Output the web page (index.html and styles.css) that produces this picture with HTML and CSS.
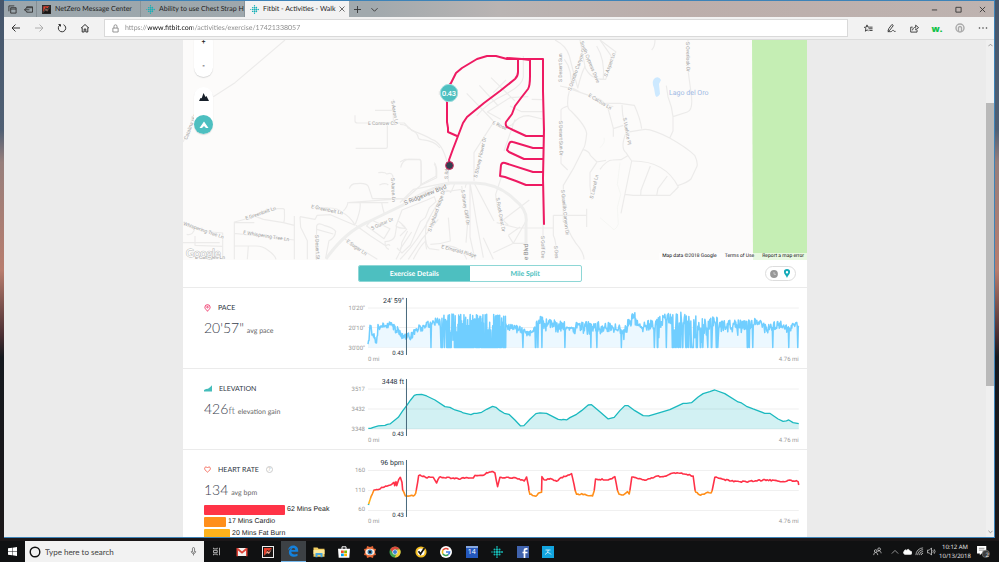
FILE: index.html
```html
<!DOCTYPE html>
<html lang="en">
<head>
<meta charset="utf-8">
<title>Fitbit - Activities - Walk</title>
<link rel="stylesheet" href="styles.css">
</head>
<body>
<svg class="defs" aria-hidden="true">
  <symbol id="fitbit" viewBox="0 0 11 11">
    <g fill="currentColor"><circle cx="5.500" cy=".9" r=".8"/><circle cx="5.500" cy="3.200" r="1.100"/><circle cx="5.500" cy="5.500" r="1.200"/><circle cx="5.500" cy="7.800" r="1.100"/><circle cx="5.500" cy="10.100" r=".8"/><circle cx="3.200" cy="3.200" r=".9"/><circle cx="3.200" cy="5.500" r="1"/><circle cx="3.200" cy="7.800" r=".9"/><circle cx="7.800" cy="3.200" r="1"/><circle cx="7.800" cy="5.500" r="1.100"/><circle cx="7.800" cy="7.800" r="1"/><circle cx="10.100" cy="5.500" r=".9"/><circle cx=".9" cy="5.500" r=".7"/></g>
  </symbol>
  <symbol id="netzero" viewBox="0 0 10 10">
    <path fill="#191514" d="M0 0h10v10H0z"/><path fill="#e8402c" d="M1 1h8L6 4 4 3 3 6 1 9z"/><path fill="#f6a58c" d="M2 8l2-4 2 1 3-3-3 5-2-1z"/>
  </symbol>
</svg>

<main class="desktop">
  <div class="window">
    <header class="titlebar">
      <div class="tab-tools">
        <button aria-label="Tabs you've set aside"><svg viewBox="0 0 10 10" width="9" height="9"><path d="M3 3h6v6H3zM3 4.500h6M1 7V1h6"/></svg></button>
        <button aria-label="Set these tabs aside"><svg viewBox="0 0 10 10" width="9" height="9"><path d="M3 4V2h6.500v6H3V6.500M3 3h6.500M.5 5.300H6M2.500 3.500.5 5.300l2 1.700"/></svg></button>
      </div>
      <nav class="tabs">
        <a class="tab" href="#"><svg width="9" height="9"><use href="#netzero"/></svg><span>NetZero Message Center</span></a>
        <a class="tab" href="#"><svg class="fit-ico" width="9" height="9"><use href="#fitbit"/></svg><span>Ability to use Chest Strap H</span></a>
        <a class="tab active" href="#"><svg class="fit-ico" width="9" height="9"><use href="#fitbit"/></svg><span>Fitbit - Activities - Walk</span><svg class="close" width="6" height="6" viewBox="0 0 6 6"><path d="M.5.5l5 5M5.500.5l-5 5"/></svg></a>
      </nav>
      <button class="new-tab" aria-label="New tab"><svg viewBox="0 0 8 8" width="7" height="7"><path d="M4 0v8M0 4h8"/></svg></button>
      <button class="new-tab" aria-label="Tab previews"><svg viewBox="0 0 8 8" width="7" height="7"><path d="M.5 2.500 4 6l3.500-3.500"/></svg></button>
      <div class="window-controls">
        <button aria-label="Minimize"><svg viewBox="0 0 8 8" width="7" height="7"><path d="M1 4.500h6"/></svg></button>
        <button aria-label="Maximize"><svg viewBox="0 0 8 8" width="7" height="7"><path d="M1 1.500h6v5.500H1z"/></svg></button>
        <button aria-label="Close"><svg viewBox="0 0 8 8" width="7" height="7"><path d="M1 1l6 6M7 1 1 7"/></svg></button>
      </div>
    </header>

    <div class="toolbar">
      <div class="nav-buttons">
        <button aria-label="Back"><svg viewBox="0 0 10 10" width="10" height="10"><path d="M9 5H1M4.500 1.500 1 5l3.500 3.500"/></svg></button>
        <button class="dim" aria-label="Forward"><svg viewBox="0 0 10 10" width="10" height="10"><path d="M1 5h8M5.500 1.500 9 5 5.500 8.500"/></svg></button>
        <button aria-label="Refresh"><svg viewBox="0 0 10 10" width="10" height="10"><path d="M6.500 1.700A3.700 3.700 0 1 1 3 2M1.500 1.500H3.500V3.500"/></svg></button>
        <button aria-label="Home"><svg viewBox="0 0 10 10" width="10" height="10"><path d="M1 5.200 5 1.500l4 3.700M2.200 4.500V9h2V6h1.600v3h2V4.500"/></svg></button>
      </div>
      <div class="address">
        <svg viewBox="0 0 8 10" width="7" height="9"><path d="M1 4.500h6V9H1zM2.300 4.500V2.500a1.700 1.700 0 0 1 3.400 0v2"/></svg>
        <input type="text" aria-label="Address" value="https://www.fitbit.com/activities/exercise/17421338057">
      </div>
      <div class="actions">
        <button aria-label="Favorites"><svg viewBox="0 0 10 10" width="9" height="9"><path d="M6 3.500 4.300 3.400 3.300 1 2.500 3.500.4 3.600l1.700 1.700L1.500 8l2-1.400 1.500.9M6 3.500h3.500M5 5.300h4.500M6 7.200h3.500"/></svg></button>
        <button aria-label="Add notes"><svg viewBox="0 0 10 10" width="9" height="9"><path d="M1 8 2 5l3.500-4.500L7 1.700 3.500 6.500 1 8.500h3c2 0 2-2 3-1.500s0 1.500 2.500 1.200"/></svg></button>
        <button aria-label="Share"><svg viewBox="0 0 10 10" width="9" height="9"><path d="M3 3.500H.8V9h7V6.500M2.800 7c.4-2.500 1.700-3.300 3.500-3.300V1.300L9.500 4 6.300 6.500V5"/></svg></button>
        <button class="webroot" aria-label="Extension">w.</button>
        <button aria-label="Profile"><svg class="gray" viewBox="0 0 10 10" width="10" height="10"><circle cx="5" cy="5" r="4"/><path d="M3.500 8V4.500a1.600 1.600 0 0 1 3 0V8"/></svg></button>
        <button aria-label="More"><svg class="solid" viewBox="0 0 10 10" width="10" height="10"><circle cx="1.500" cy="5" r=".8"/><circle cx="5" cy="5" r=".8"/><circle cx="8.500" cy="5" r=".8"/></svg></button>
      </div>
    </div>

    <div class="viewport">
      <div class="page">
        <section class="map" aria-label="Route map">
          <svg class="map-art" viewBox="183 40 624 220">
            <path fill="#c5eeb4" d="M752 40h55v220H753z"/>
            <!-- western streets -->
            <g class="roads" transform="translate(180 36) scale(.33333)">
              <path d="M315 12 165 140 100 182M36 240Q34 270 9 318"/>
              <path d="M525 238v17q0 6 8 6h140q12 12 10 14 30 13 32 30 0 4 10 6 40 4 55 25M585 223h55v38M622 263v70q0 4-5 4h-90M640 190v40M778 165v12"/>
              <path d="M508 458q5-16 22-15 28-3 35 8 10 30 12 37h105M595 410q20-3 25 4 20-8 19 15v58M662 395q5-25 25-25l30 1q7 0 6 8v68l-50 45M763 380q9 8 7 45l-50 24M505 500l160-12 10 12M598 447q20-8 27 0M605 500q3 18 8 33M505 500h120"/>
              <path d="M490 525q13-13 14-27M540 500q4 18-14 65M395 515q80-3 88 12 28 14 42 40M163 670V558q45-10 62-20 30-18 55-20h28q7 0 5 8 2 30-3 34l-60-10-33-12-10 12M163 592l180 20M163 630h65q20 0 35 12 22 15 25 28M205 630l-3 40M343 540v130M343 568l-33-8M163 560h60M360 542l45 8q5-8 6-12l40-2 42 18 32 14M360 542l2 32 20 40v56M408 670l2-100q3-12 22-2 28 7 35 18-2 20-20 28l-10 52M410 580l50 14M490 606 592 670M527 568l45 32 45 29q10-6 13 0"/>
              <path d="M9 558q50 20 60 28l60 5M128 590v80M45 600v28l83 3M20 595q20 5 26-22M9 620h110M560 570 612 608 630 578 575 552zM655 555q25 20 20 22-20 0-27-7l18-48 75-30 22-10 5 15-20 18-12 30-15 12-30 70-25 24-15-15M650 570l-5 30q-5 15-30 17 0 20 12 23M700 670q20-40 36-54M736 596q0 32 12 42l30 4M648 670q18-30 17-50l18-35"/>
            </g>
            <!-- central streets -->
            <g class="roads" transform="translate(400 36) scale(.33333)">
              <path d="M0 265q22 0 35 18 48 18 62 28 30 10 45 70M0 378l15-8h45q5 0 4 75M102 385q8 4 6 36L60 447M145 400v40M200 172 280 255M238 148 295 210M273 125 345 195M230 240q30-40 90-67 48-26 50-50V60M280 260 222 350v85M302 250 262 228 330 185 385 182M395 190l32 1M330 210l35 17h65M315 275l20-8q20-28 50-28l42 10M280 170l38-38M345 250 312 345M305 420l-18 55q5 70 38 92M305 555 388 492M290 560 352 576h107M340 622l40-70M280 650l60-28h40M325 598l15 24M325 598 360 573"/>
              <path d="M142 440 40 460 0 500M165 440q-15 40-15 25l-20-5M185 450l18 110-5 60M210 443v160l15 67M196 455q0-15 14-15l20 120 20 105M222 440l60 115M130 468l55-8M132 468 80 560q-8 50 0 80M0 670q50-50 90-125M25 670l40-60 50-60M145 545l6 70q-30 10-60 10M0 600l20-20-15-14M0 640l35-52M250 605l30 65M125 628q60 0 75 42"/>
              <path d="M465 12Q500 30 508 60q10 40 25 95M540 12l15 80q-10 16-22 65M600 12l35 50M480 150l22 5q20 0 40 15M515 160l85 30q18 20 40 22M508 165q-6 20-5 40 0 15 10 20 45 45 47 68-4 40-10 45l-30 60-30 50v110M503 210q-20 8-20 12v160q10 10 20 20M548 340q20 5 23 18l20 20M590 380l-20 30v40l5 40M590 378l28-5M460 538h100M460 538v60q10 20 10 72M500 570q15 38 38 65 14 20 14 35M560 518v55M429 100v570"/>
              <path d="M513 160q5-60-20-90M553 90q18 42 60 40M590 30q25 40 20 100"/>
            </g>
            <path class="boulevard" d="M326 259 Q345 232 368 222 L403 205 Q425 190 450 183 H475 Q500 184 515 200 Q528 210 526 223 V260"/>
            <!-- eastern streets -->
            <g class="roads" transform="translate(600 36) scale(.33333)">
              <path d="M0 12 48 48 30 72M42 60 17 130H0M165 12q0 20-10 30M264 12v90l8 60q10 60-10 66l-43 14q-3-30-15-60l-5-33M219 240v45l-10 22M0 190q25 20 20 12h40l43 6q18 40 22 70M20 202l20 75v25M40 278l30-10M66 207q0 30 8 55l5 27 50-8q20-6 80 25 50 28 75 52 10 20 7 33l-18 38q-10 10-40 20M78 290q-18 45 0 60l17 25M0 400q20-28 38-28l25-1 20-12M95 375l-32 157M95 375q100-2 140 78l-25 25H100l-26-3M151 390l-28 73-1 15M202 420l-28 38-4 20"/>
              <path class="trail" d="M12 305q5 15-12 30M60 380l-8 65 10 30-10 40 3 50q-12 25-20 10L0 545"/>
            </g>
            <path fill="#cde9ff" d="M655 78q4-2 6 2l-2 4 1 10q-4 6-5 0l-1-6q-3-7 1-10z"/>
            <g class="streets">
              <text x="368" y="125">E Conrow Ct</text><text transform="translate(391 101) rotate(80)">S Aaron Ln</text><text transform="translate(391 178) rotate(87)">S Aaron Ln</text>
              <text transform="translate(246 220) rotate(-19)">E Greenbelt Ln</text><text transform="translate(311 208) rotate(12)">E Greenbelt Ln</text><text transform="translate(243 234) rotate(9)">E Whispering Tree Ln</text><text transform="translate(183 225) rotate(19)">Whispering Tree Ln</text>
              <text transform="translate(187 140) rotate(-69)">Catalina Hls</text><text transform="translate(372 230) rotate(-24)">S Guitar Dr</text><text transform="translate(346 242) rotate(35)">E Sugar Ln</text><text transform="translate(315 235) rotate(87)">S Desert St</text><text x="195" y="259">E Cat Eyes Ln</text>
              <text transform="translate(431 232) rotate(-71)">S Highland Ridge Dr</text><text transform="translate(461 190) rotate(81)">S Shiney Cliff Dr</text><text transform="translate(477 178) rotate(-77)">S Stoney Flower Dr</text><text transform="translate(496 198) rotate(80)">S Rock Crest Dr</text><text x="492" y="124" transform="rotate(23 492 124)">E Rose</text><text transform="translate(448 179) rotate(-86)">S Rd</text><text transform="translate(441 248) rotate(15)">E Emerald Ridge</text>
              <text transform="translate(559 121) rotate(89)">S Desert Sun Dr</text><text transform="translate(561 190) rotate(84)">S Granillo Canyon Dr</text><text transform="translate(541 236) rotate(89)">S Golf Cre</text><text transform="translate(554 246) rotate(84)">S Des</text><text transform="translate(562 82) rotate(-90)">S Desert Sun</text><text transform="translate(571 91) rotate(-71)">S Ocotillo Canyon Dr</text><text transform="translate(580 42) rotate(68)">South Cypress Drive</text><text transform="translate(588 96) rotate(32)">E Cactus Ln</text><text transform="translate(607 77) rotate(-70)">S Aspen Ln</text><text transform="translate(593 199) rotate(-77)">S Laurel Ln</text><text transform="translate(623 118) rotate(80)">S Vuelvite Pl</text><text transform="translate(686 42) rotate(89)">S Overlook Dr</text>
            </g>
            <text class="blvd-name" transform="translate(405 205) rotate(-22)">S Ridgeview Blvd</text><text class="blvd-name" transform="translate(528 260) rotate(-90)">e Blvd</text>
            <text class="lake" x="669" y="95">Lago del Oro</text>
            <path class="route" d="M450 165 449 160 453 149 458 136 463 123 467 117 484 103 500 91 515 79Q518 76 518 72V60M457 136 448 132V128L447 122V93Q448 86 451 83L456 73 462 68 477 59 487 56H496L507 59 543 59V91L544 130 543 178 544 224M507 58 522 59 530 60V76Q530 86 528 89L521 98 515 106 512 114 506 122Q505 125 507 127L513 130 526 136H544M543 148H533L513 142Q510 141 509 144L507 150 509 152 524 159H543M543 172H533L505 163Q502 162 501 165L500 176 505 177 516 181 526 185H543"/>
            <circle cx="449.500" cy="165.500" r="3.900" fill="#33404f" stroke="#d8265d"/>
            <circle cx="449" cy="93" r="8.700" fill="#4dbfc0" stroke="#a5dfe0"/><text class="mile" x="449" y="95.500">0.43</text>
            <text class="google" x="186" y="257">Google</text>
          </svg>
          <div class="map-controls">
            <div class="pill zoom"><button>+</button><button>-</button></div>
            <div class="pill kind">
              <button aria-label="Terrain"><svg viewBox="0 0 10 8" width="10" height="8"><path fill="#17202a" d="M0 8 1.500 5l1.200.3L4.500 0 6.500 4l1-1L9 6l1 2z"/></svg></button>
              <button class="on" aria-label="Route"><svg viewBox="0 0 10 8" width="10" height="8"><path fill="#fff" d="M.5 7 5 .5 9.500 7H7L5 5 3 7z"/></svg></button>
            </div>
          </div>
          <div class="credits"><span>Map data ©2018 Google</span><a href="#">Terms of Use</a><a href="#">Report a map error</a></div>
        </section>

        <div class="switcher">
          <div class="segments"><button class="selected">Exercise Details</button><button>Mile Split</button></div>
          <div class="units">
            <button aria-label="By time"><svg viewBox="0 0 8 8" width="8" height="8"><circle cx="4" cy="4" r="3.900" fill="#989898"/><path d="M4 2v2.300h2" fill="none" stroke="#ddd" stroke-width=".7"/></svg></button>
            <button aria-label="By distance"><svg viewBox="0 0 8 9" width="8" height="9"><path fill="#12aab8" fill-rule="evenodd" d="M4 0a3 3 0 0 1 3 3.200C7 5 4.500 7 4 9 3.500 7 1 5 1 3.200A3 3 0 0 1 4 0zm0 2a1.200 1.200 0 1 0 0 2.400A1.200 1.200 0 0 0 4 2z"/></svg></button>
          </div>
        </div>

        <section class="panel">
          <div class="summary">
            <h2><svg viewBox="0 0 8 9" width="7" height="8" fill="none" stroke="#ee2b62"><path d="M4 .7a3 3 0 0 1 3 3C7 5.500 5 6.500 4 8.300 3 6.500 1 5.500 1 3.700a3 3 0 0 1 3-3z"/><circle cx="4" cy="3.500" r=".9"/></svg>PACE</h2>
            <p class="value">20'57" <small>avg pace</small></p>
          </div>
          <svg class="chart" viewBox="345 287 462 81">
            <path class="grid" d="M368 308h431M368 327.500h431M368 347.500h431"/>
            <g class="scale"><text x="365" y="310">10'20"</text><text x="365" y="330">20'10"</text><text x="365" y="350">30'00"</text><text x="799" y="361">4.76 mi</text></g><text class="zero" x="368" y="361">0 mi</text>
            <path id="pace-area" fill="#ecf8ff"/><path id="pace-line" class="pace-line"/>
            <path class="cursor" d="M406.500 298v57"/><g class="reading"><text x="404" y="303">24' 59"</text><text class="at" x="404" y="355">0.43</text></g>
          </svg>
        </section>

        <section class="panel">
          <div class="summary">
            <h2><svg viewBox="0 0 8 7" width="8" height="7"><path fill="#45bdbb" d="M0 6.500V5l2-1 2-.3 2-1.500L8 .3v6.200z"/></svg>ELEVATION</h2>
            <p class="value">426<span>ft</span> <small>elevation gain</small></p>
          </div>
          <svg class="chart" viewBox="345 368 462 81">
            <path class="grid" d="M368 389h431M368 409h431M368 429h431"/>
            <g class="scale"><text x="365" y="391">3517</text><text x="365" y="411">3432</text><text x="365" y="431">3348</text><text x="799" y="442">4.76 mi</text></g><text class="zero" x="368" y="442">0 mi</text>
            <path id="elevation-area" fill="#12b5bd" fill-opacity=".19"/><path id="elevation-line" class="elevation-line"/>
            <path class="cursor" d="M406.500 379v57"/><g class="reading"><text x="404" y="384">3448 ft</text><text class="at" x="404" y="436">0.43</text></g>
          </svg>
        </section>

        <section class="panel">
          <div class="summary">
            <h2><svg viewBox="0 0 8 8" width="7" height="7" fill="none" stroke="#f4604f"><path d="M4 7C2 5.500.7 4.200.7 2.700.7.800 3.200.5 4 2.200 4.800.5 7.300.8 7.300 2.700 7.300 4.200 6 5.500 4 7z"/></svg>HEART RATE<button class="help" aria-label="About heart rate">?</button></h2>
            <p class="value">134 <small>avg bpm</small></p>
            <ul class="zones"><li class="peak">62 Mins Peak</li><li class="cardio">17 Mins Cardio</li><li class="burn">20 Mins Fat Burn</li></ul>
          </div>
          <svg class="chart" viewBox="345 449 462 81">
            <linearGradient id="zones" gradientUnits="userSpaceOnUse" x1="0" y1="470" x2="0" y2="510"><stop offset=".5" stop-color="#ff3148"/><stop offset=".52" stop-color="#ff8a17"/><stop offset=".68" stop-color="#ff931b"/><stop offset=".74" stop-color="#ffb31c"/><stop offset=".84" stop-color="#ffb31c"/><stop offset=".86" stop-color="#35b8c0"/></linearGradient>
            <path class="grid" d="M368 470.500h431M368 490.500h431M368 510.500h431"/>
            <g class="scale"><text x="365" y="472">160</text><text x="365" y="492">110</text><text x="365" y="511">60</text><text x="799" y="523">4.76 mi</text></g><text class="zero" x="368" y="523">0 mi</text>
            <path id="heart-line" class="heart-line"/>
            <path class="cursor" d="M406.500 460v57"/><g class="reading"><text x="404" y="465">96 bpm</text><text class="at" x="404" y="517">0.43</text></g>
          </svg>
        </section>
      </div>
      <div class="scrollbar" aria-hidden="true">
        <svg viewBox="0 0 6 4" width="5" height="4"><path d="M.5 3.500 3 1l2.500 2.500"/></svg>
        <div class="track"><div class="thumb"></div></div>
        <svg viewBox="0 0 6 4" width="5" height="4"><path d="M.5.5 3 3 5.500.5"/></svg>
      </div>
    </div>
  </div>
</main>

<footer class="taskbar">
  <button class="start" aria-label="Start"><svg viewBox="0 0 10 10" width="9" height="9"><path fill="#fff" d="M0 1.400 4.500.8v3.900H0zM5 .7 10 0v4.700H5zM0 5.200h4.500v3.900L0 8.500zM5 5.200h5V10L5 9.200z"/></svg></button>
  <div class="search">
    <svg viewBox="0 0 12 12" width="12" height="12" fill="none" stroke="#111"><circle cx="6" cy="6" r="4.800" stroke-width="1.400"/></svg>
    <input type="text" aria-label="Search" placeholder="Type here to search">
    <svg viewBox="0 0 8 10" width="7" height="9" fill="none" stroke="#555" stroke-width=".8"><rect x="2.800" y=".5" width="2.400" height="5.500" rx="1.200"/><path d="M1.500 4.500c0 4 5 4 5 0M4 7.500v2"/></svg>
  </div>
  <nav class="apps">
    <button aria-label="Task view"><svg class="small" viewBox="0 0 12 12"><path fill="none" stroke="#ddd" stroke-width="1" d="M2 1v1.500h5V1M2 4.500h5v3H2zM2 11V9.500h5V11M10 1v10"/></svg></button>
    <button aria-label="Gmail"><svg viewBox="0 0 12 12"><path fill="#f4f1ef" d="M1 2h10v8H1z"/><path fill="#dd4236" d="M.5 2H2l4 3.500L10 2h1.500v8.300H10V4.500l-4 3.300-4-3.300v5.800H.5z"/></svg></button>
    <button aria-label="NetZero"><svg viewBox="0 0 12 12"><path fill="#eee" d="M0 0h12v12H0z"/><use href="#netzero" x="1" y="1" width="10" height="10"/></svg></button>
    <button class="running" aria-label="Edge"><svg viewBox="0 0 12 12"><path fill="#1581dc" d="M1 5.300C1.500 2 3.700.4 6.300.4 9.500.4 11.200 2.700 11.200 5.500v1.300H4.300c.1 3 4 3.200 6.200 1.900v2.400c-4 1.800-8.600.3-8.600-3.900 0-1.800 1-3.200 2.600-3.900C3 3.500 2 4 1 5.300zm3.500-.4h3.700c0-2.500-3.400-2.500-3.700 0z"/></svg></button>
    <button aria-label="File Explorer"><svg viewBox="0 0 12 12"><path fill="#f2cf63" d="M.5 1.500h4l1 1.200h6v8H.5z"/><path fill="#fbe89d" d="M.5 4h11v4H.5z"/><path fill="#4aa6dd" d="M2.500 7h7v4.300h-2V9h-3v2.300h-2z"/></svg></button>
    <button aria-label="Store"><svg viewBox="0 0 12 12"><path fill="none" stroke="#fff" d="M4 3V.8h4V3"/><path fill="#fff" d="M0 2.800h12l-.7 9H.7z"/><path fill="#f25022" d="M3 4.500h2.800v2.600H3z"/><path fill="#7fba00" d="M6.200 4.500H9v2.600H6.200z"/><path fill="#00a4ef" d="M3 7.600h2.800v2.600H3z"/><path fill="#ffb900" d="M6.200 7.600H9v2.600H6.200z"/></svg></button>
    <button aria-label="Viewer"><svg viewBox="0 0 12 12"><path fill="#e56736" d="M3 0 6 1l3-1 .5 2.500L12 3l-1 3 1 3-2.500.5L9 12l-3-1-3 1-.5-2.500L0 9l1-3-1-3 2.500-.5z"/><ellipse cx="6" cy="6" rx="4.500" ry="3.300" fill="#f7ebdf"/><circle cx="6" cy="6" r="2.500" fill="#367daf"/><circle cx="6" cy="6" r="1.200" fill="#171b20"/></svg></button>
    <button aria-label="Chrome"><svg viewBox="0 0 12 12"><circle cx="6" cy="6" r="5.500" fill="#40a551"/><path fill="#dc4a3c" d="M1.200 3.300a5.500 5.500 0 0 1 9.700.2H6L4 7z"/><path fill="#f5ca3a" d="M11 3.500A5.500 5.500 0 0 1 5.500 11.500L8.300 7V3.500z"/><circle cx="6" cy="6" r="2.600" fill="#f5f5f5"/><circle cx="6" cy="6" r="2" fill="#3c80d4"/></svg></button>
    <button aria-label="Norton"><svg viewBox="0 0 12 12"><circle cx="6" cy="6" r="4.600" fill="#fff" stroke="#f3bd20" stroke-width="2"/><path fill="none" stroke="#161616" stroke-width="1.700" d="m3.500 5.300 2 2.700L9.500 2"/></svg></button>
    <button aria-label="Google"><svg viewBox="0 0 12 12"><circle cx="6" cy="6" r="6" fill="#fff"/><g fill="none" stroke-width="1.600"><path stroke="#e44b3d" d="M8.500 3.500A3.600 3.600 0 0 0 2.900 4.200"/><path stroke="#efba22" d="M2.900 4.200a3.600 3.600 0 0 0 0 3.600"/><path stroke="#3ba457" d="M2.900 7.800a3.600 3.600 0 0 0 5.300.9"/><path stroke="#427fe6" d="M8.200 8.700A3.600 3.600 0 0 0 9.600 6H6"/></g></svg></button>
    <button class="calendar" aria-label="Calendar"><span>14</span></button>
    <button class="fit-app" aria-label="Fitbit"><svg viewBox="0 0 12 12"><use href="#fitbit" width="12" height="12"/></svg></button>
    <button aria-label="Facebook"><svg viewBox="0 0 12 12"><path fill="#4063ad" d="M0 0h12v12H0z"/><path fill="none" stroke="#fff" stroke-width="1.700" d="M7.500 12V4.500Q7.500 2.800 9.200 2.800h1.300M5.500 6.500h5"/></svg></button>
    <button aria-label="Fitness"><svg viewBox="0 0 12 12"><path fill="#12a5df" d="M0 0h12v12H0z"/><path fill="none" stroke="#fff" stroke-width=".7" d="M3.500 4h5M6.300 4 5.500 6.500 3 8.500M5.500 6.500 7.500 7l1.500 1.500"/></svg></button>
  </nav>
  <div class="tray">
    <button aria-label="People"><svg viewBox="0 0 10 10" width="9" height="9"><path d="M.8 9c.2-4 4-4 4.500 0M5 5.500c1-2 4-1.500 4 1.500"/><circle cx="3" cy="4.500" r="1.500"/><circle cx="6.800" cy="2.500" r="1.500"/></svg></button>
    <button aria-label="Hidden icons"><svg viewBox="0 0 10 10" width="8" height="8"><path d="M1 7l4-4 4 4"/></svg></button>
    <button aria-label="OneDrive"><svg viewBox="0 0 10 10" width="9" height="9"><path fill="#fff" d="M1 5q1-3 3-1.500Q6 1 8 4.500q2 0 2 2t-2 1.700H2Q-.5 7 1 5z"/></svg></button>
    <button aria-label="Network"><svg viewBox="0 0 10 10" width="9" height="9"><path d="M1 9a8 8 0 0 1 8-8M3 9a6 6 0 0 1 6-6M5 9a4 4 0 0 1 4-4M7 9a2 2 0 0 1 2-2"/></svg></button>
    <button aria-label="Volume"><svg viewBox="0 0 10 10" width="9" height="9"><path d="M.5 3.500h2L5 1v8L2.500 6.500h-2zM6.500 3.500q1 1.500 0 3M8 2.500q2 2.500 0 5"/></svg></button>
    <time><span>10:12 AM</span><span>10/13/2018</span></time>
    <button class="notices" aria-label="Notifications"><svg viewBox="0 0 14 13" width="13" height="12"><path fill="#fff" stroke="none" d="M0 0h10v8H5L3 10V8H0z"/><path stroke="#777" d="M2 2.500h6M2 4.500h6"/><circle cx="9.500" cy="8.500" r="4" fill="#3e3e3e" stroke="#888" stroke-width=".6"/></svg><span>2</span></button>
  </div>
</footer>
<script src="charts.js"></script>
</body>
</html>
```
FILE: styles.css
```css
* { box-sizing: border-box; }
html, body { height: 100%; }
body {
  margin: 0;
  display: flex;
  flex-direction: column;
  overflow: hidden;
  font-family: "Open Sans", "Noto Sans", sans-serif;
  font-size: 7px;
  color: #222;
  background: #1a1516;
  text-rendering: geometricPrecision;
}
button, input { font: inherit; color: inherit; border: 0; padding: 0; margin: 0; background: none; text-rendering: inherit; }
button { display: flex; align-items: center; justify-content: center; }
a { color: inherit; text-decoration: none; }
svg { display: block; flex: none; }
h2, p, ul { margin: 0; padding: 0; font-weight: 400; }
.defs { position: absolute; width: 0; height: 0; }

.desktop {
  flex: 1;
  min-height: 0;
  display: flex;
  padding: 0 4px 3px;
  background: linear-gradient(#45566b 0%, #506074 24%, #977f7c 30%, #b87d6e 50%, #4a2e32 62%, #15191f 66%, #1b1718 100%);
}
.window {
  flex: 1;
  min-width: 0;
  display: flex;
  flex-direction: column;
  border: 1px solid #3d83b8;
  border-width: 1px 1px 1px 0;
  background: #ebebeb;
}

/* Browser chrome */
.titlebar {
  display: flex;
  height: 16px;
  background: linear-gradient(90deg, #9ba6ac, #a1a9ad 37%, #b9b4b3 50%, #bcaeab 68%, #beb3b0);
}
.titlebar svg, .toolbar svg { fill: none; stroke: #333; stroke-width: 1; }
.tab-tools { display: flex; justify-content: space-around; width: 33px; border-right: 1px solid #858e94; }
.tabs { display: flex; font-family: Lato, sans-serif; }
.tab { display: flex; align-items: center; gap: 4px; width: 104px; padding: 0 0 0 5px; border-right: 1px solid #8a9398; white-space: nowrap; }
.tab span { flex: 1; }
.tab.active { padding-right: 5px; background: #f2f2f2; border: 0; }
.titlebar .fit-ico { color: #18b0b7; stroke: none; }
.titlebar .close { stroke-width: 0.700px; }
.new-tab { width: 17px; }
.window-controls { display: flex; margin-left: auto; }
.window-controls button { width: 24px; }
.toolbar { display: flex; align-items: center; height: 23px; background: #f2f2f2; border-bottom: 1px solid #dcdcdc; }
.nav-buttons { display: flex; width: 92px; }
.nav-buttons button, .actions button { flex: 1; height: 18px; }
.nav-buttons .dim { opacity: 0.350; }
.address { flex: 1; display: flex; align-items: center; gap: 6px; height: 18px; margin-left: 8px; padding: 0 7px; background: #fff; border: 1px solid #d9d9d9; }
.address svg { stroke: #888; }
.address input {
  flex: 1;
  outline: 0;
  font-family: Lato, sans-serif;
  background: linear-gradient(90deg, #888 23px, #111 23px, #111 67px, #888 67px);
  -webkit-background-clip: text;
  background-clip: text;
  -webkit-text-fill-color: transparent;
}
.actions { display: flex; width: 137px; margin: 0 0 0 9px; }
.toolbar .gray { stroke: #aaa; stroke-width: 1.400; }
.toolbar .solid { fill: #444; stroke: none; }
.webroot { color: #12c24a; font-size: 9px; font-weight: 800; }

.viewport { flex: 1; min-height: 0; display: flex; overflow: hidden; }
.page { width: 64%; max-width: 624px; margin: 0 auto; background: #fff; overflow: hidden; }
.scrollbar { display: flex; flex-direction: column; align-items: center; gap: 4px; width: 8px; padding: 3px 0; background: #efefef; fill: none; stroke: #888; }
.track { flex: 1; width: 100%; padding-top: 52px; }
.thumb { height: 67%; background: #b9b9b9; }

/* Route map */
.map { position: relative; overflow: hidden; background: #fcfbfa; }
.map-art { width: 100%; height: auto; }
.roads { fill: none; stroke: #ecebea; stroke-width: 3.500; stroke-linejoin: round; }
.roads .trail { stroke: #f2f3f0; stroke-width: 2; }
.boulevard { fill: none; stroke: #eeeeed; stroke-width: 3; }
.route { fill: none; stroke: #ee1a62; stroke-width: 2; stroke-linejoin: round; stroke-linecap: round; }
.streets { font: 5px Roboto, sans-serif; fill: #a0a0a0; stroke: #fcfbfa; stroke-width: 1px; paint-order: stroke; }
.blvd-name { font: 6px Roboto, sans-serif; fill: #858585; stroke: #fcfbfa; stroke-width: 1px; paint-order: stroke; }
.lake { font: 7px Roboto, sans-serif; fill: #9fb9e4; }
.mile { font: 700 7px Lato, sans-serif; fill: #fff; text-anchor: middle; }
.google { font: 11px Lato, sans-serif; fill: #fff; stroke: #bbb; stroke-width: 1px; paint-order: stroke; }
.map-controls { position: absolute; top: -8px; left: 11px; display: flex; flex-direction: column; gap: 10px; }
.pill { width: 19px; border-radius: 10px; background: #fff; box-shadow: 0 1px 1px #d8d8d8; }
.pill button { width: 19px; height: 19px; font: 700 7px Lato, sans-serif; color: #222; }
.zoom { padding-bottom: 2px; }
.zoom button + button { margin-top: 5px; }
.kind button + button { margin-top: 9px; }
.pill .on { border-radius: 50%; background: #4dbfc0; }
.credits { position: absolute; right: 0; bottom: 0; display: flex; gap: 8px; padding: 0 3px; height: 7px; line-height: 7px; font-family: Roboto, sans-serif; font-size: 5px; color: #111; background: rgba(255, 255, 255, 0.600); }

.switcher { display: grid; grid-template-columns: 28% 224px 1fr; align-items: center; height: 27px; }
.segments { grid-column: 2; display: grid; grid-template-columns: 1fr 1fr; height: 17px; border: 1px solid #8ed7d6; border-radius: 2px; overflow: hidden; font: 700 7px Lato, sans-serif; color: #4dbfc0; }
.segments .selected { color: #fff; background: #4dbfc0; }
.units { justify-self: end; display: flex; align-items: center; justify-content: center; gap: 5px; width: 31px; height: 15px; margin-right: 11px; border: 1px solid #ddd; border-radius: 8px; }

/* Statistic panels */
.panel { display: grid; grid-template-columns: 26% 1fr; border-top: 1px solid #ebebeb; }
.panel .chart { width: 100%; height: auto; margin-top: -1px; }
.summary { padding: 15px 0 0 21px; font-family: Lato, sans-serif; white-space: nowrap; }
.summary h2 { display: flex; align-items: center; gap: 7px; height: 10px; font-size: 7px; color: #2c3642; }
.help { width: 7px; height: 7px; border: 1px solid #ccc; border-radius: 50%; font-size: 5px; color: #999; }
.value { margin-top: 7px; line-height: 16px; font-size: 14px; font-weight: 300; color: #38404c; }
.value small { font-size: 7px; font-weight: 400; color: #666; margin-left: -1px; }
.value span { font-size: 10px; }
.zones { display: grid; gap: 2px; margin-top: 4px; list-style: none; font: 7px "Liberation Sans", sans-serif; color: #222; }
.zones li { display: flex; align-items: center; gap: 2px; height: 10px; }
.zones li::before { content: ""; height: 10px; border-radius: 1px; }
.peak::before { width: 81px; background: #ff3347; }
.cardio::before { width: 22px; background: #ff8f1c; }
.burn::before { width: 26px; background: #ffb31c; }
.grid { stroke: #f0f0f0; fill: none; }
.scale, .zero { font: 6px Roboto, sans-serif; fill: #999; }
.scale { text-anchor: end; }
.reading { font: 7px Roboto, sans-serif; fill: #1d3140; text-anchor: end; }
.reading .at { font-size: 6px; }
.cursor { stroke: #45677b; fill: none; }
.pace-line, .elevation-line, .heart-line { fill: none; stroke-linejoin: round; }
.pace-line { stroke: #70ceff; stroke-width: 1.500px; }
.elevation-line { stroke: #1bb9bf; stroke-width: 1.300px; }
.heart-line { stroke: url(#zones); stroke-width: 1.600px; }

/* Taskbar */
.taskbar { display: flex; align-items: stretch; height: 21px; background: #101112; color: #eee; }
.start { width: 25px; }
.search { display: flex; align-items: center; gap: 4px; flex: 0 0 179px; padding: 0 7px 0 4px; background: #f2f2f2; }
.search input { flex: 1; min-width: 0; font-family: Lato, sans-serif; font-size: 8px; }
.search input::placeholder { color: #444; }
.apps { flex: 0 0 357px; display: grid; grid-template-columns: repeat(14, 1fr); }
.apps svg { width: 12px; height: 12px; }
.apps .small { width: 9px; height: 9px; }
.apps .running { background: #3d4145; border-bottom: 1px solid #76b9ed; }
.calendar span { width: 12px; height: 12px; line-height: 10px; border-top: 2px solid #85a7df; background: #2458bd; color: #fff; font-size: 7px; text-align: center; }
.fit-app { color: #16b5b0; }
.tray { display: flex; margin-left: auto; padding-right: 5px; }
.tray svg { fill: none; stroke: #ddd; stroke-width: 0.800px; }
.tray button { width: 12px; }
.tray button:first-child { width: 24px; }
.tray time { width: 36px; display: flex; flex-direction: column; justify-content: center; text-align: center; line-height: 9px; font-size: 6px; white-space: nowrap; }
.tray .notices { position: relative; width: 21px; }
.notices span { position: absolute; right: 5px; bottom: 3px; font-size: 6px; line-height: 8px; }
```
FILE: charts.js
```js
// Control points are x, y pairs.
function pairs(text) {
  return text.trim().split(/\s+/).reduce(function (list, p) {
    var n = p.split(',').map(Number);
    if (n.length === 2) { list.push(n); }
    return list;
  }, []);
}
function draw(id, points) {
  document.getElementById(id).setAttribute('d', 'M' + points.map(function (p) {
    return p[0].toFixed(2) + ' ' + p[1].toFixed(2);
  }).join('L'));
}
var seed = 17;
function random() { seed = (seed * 16807) % 2147483647; return seed / 2147483647; }
function sample(points, x) {
  for (var i = 1; i < points.length; i++) {
    var a = points[i - 1], b = points[i];
    if (x <= b[0]) { return a[1] + (b[1] - a[1]) * (x - a[0]) / ((b[0] - a[0]) || 1); }
  }
  return points[points.length - 1][1];
}

// Pace: trend line, then [end x, swing up, swing down, share of full stops].
var trend = pairs('368,345 370,327 373,333 376,344 378,328 386,326 392,325 397,332 401,336 407,337 412,336 418,329 430,324 440,321 470,321 505,321 507,327 520,330 530,334 540,322 550,325 560,327 580,328 600,327 612,329 624,331 628,325 634,317 640,327 655,326 668,322 680,322 700,327 718,325 722,327 745,327 758,322 765,329 780,327 790,328 799,325');
var bands = [[378, 4, 9, 0], [395, 5, 5, 0], [400, 7, 4, 0], [440, 4, 5, 0], [446, 6, 16, .2], [506, 7, 24, .5], [535, 4, 4, 0], [545, 6, 6, .05], [585, 6, 8, 0], [620, 6, 8, 0], [626, 3, 14, .1], [654, 6, 8, 0], [660, 8, 20, .4], [672, 9, 14, .04], [698, 10, 24, .4], [719, 9, 24, .28], [746, 7, 9, 0], [754, 6, 9, .1], [799, 6, 6, 0]];
var stops = [431, 441, 523, 536, 538, 542, 565, 591, 597, 748, 753, 773, 789, 798];
var pace = [];
for (var x = 368; x <= 799; x += (x > 446 && x < 506) ? .25 : .5) {
  var band = bands.find(function (b) { return x <= b[0]; });
  var r = random();
  var y = sample(trend, x) + (r < .5 ? -band[1] * random() : band[2] * random() * random());
  if (random() < band[3] || stops.indexOf(x) >= 0) { y = 347.5; }
  pace.push([x, Math.min(y, 347.5)]);
}
draw('pace-line', pace);
draw('pace-area', [[368, 347.5]].concat(pace, [[799, 347.5]]));

function place(points, left, top) {
  return points.map(function (p) { return [left + p[0] / 3, top + p[1] / 3]; });
}
var elevation = place(pairs('565,190 572,190 580,187 595,183 615,181 622,178 630,177 655,157 668,138 680,122 692,105 703,91 710,89 725,88 740,93 765,105 795,125 810,127 825,135 845,141 850,144 873,149 882,145 890,145 905,142 920,133 938,124 948,127 960,137 973,145 987,148 1005,165 1022,183 1032,182 1050,163 1068,146 1080,144 1100,145 1135,163 1145,165 1150,163 1160,165 1170,158 1190,148 1205,137 1225,120 1235,119 1260,140 1285,162 1303,157 1320,137 1335,122 1345,122 1365,137 1390,152 1407,153 1440,143 1470,134 1510,115 1520,115 1535,113 1555,96 1570,86 1590,80 1605,75 1635,86 1675,111 1685,114 1700,124 1720,132 1755,145 1770,145 1795,162 1810,169 1820,168 1827,165 1840,173 1857,176'), 180, 365);
draw('elevation-line', elevation);
draw('elevation-area', [[368.3, 429]].concat(elevation, [[799, 429]]));

var heart = place(pairs('565,180 573,155 582,135 600,132 605,127 620,124 635,118 642,112 644,122 648,110 650,122 656,104 661,97 666,112 668,135 676,153 700,153 707,145 709,135 716,92 720,90 738,98 760,97 770,114 778,97 820,99 838,103 850,98 880,99 885,91 912,90 920,83 935,80 945,84 953,125 960,97 985,97 1010,100 1033,108 1040,96 1046,125 1047,137 1050,148 1068,154 1075,145 1085,142 1086,95 1092,104 1115,102 1130,109 1140,100 1165,90 1175,86 1186,137 1190,148 1215,148 1238,153 1243,137 1247,102 1285,105 1305,95 1313,137 1318,148 1330,150 1343,140 1348,147 1350,137 1356,96 1395,106 1432,93 1450,95 1480,84 1505,84 1540,93 1546,137 1548,142 1562,151 1580,143 1594,144 1597,137 1605,97 1625,101 1650,108 1700,111 1755,104 1810,110 1830,105 1855,110 1857,120'), 180, 445);
var beat = [];
heart.forEach(function (p, i) {
  var q = heart[i + 1];
  beat.push(p);
  if (!q) { return; }
  for (var t = p[0] + 1.3; t < q[0] - 1; t += 1.3) {
    beat.push([t, p[1] + (q[1] - p[1]) * (t - p[0]) / (q[0] - p[0]) + (random() - .5) * 1.4]);
  }
});
draw('heart-line', beat);
```
